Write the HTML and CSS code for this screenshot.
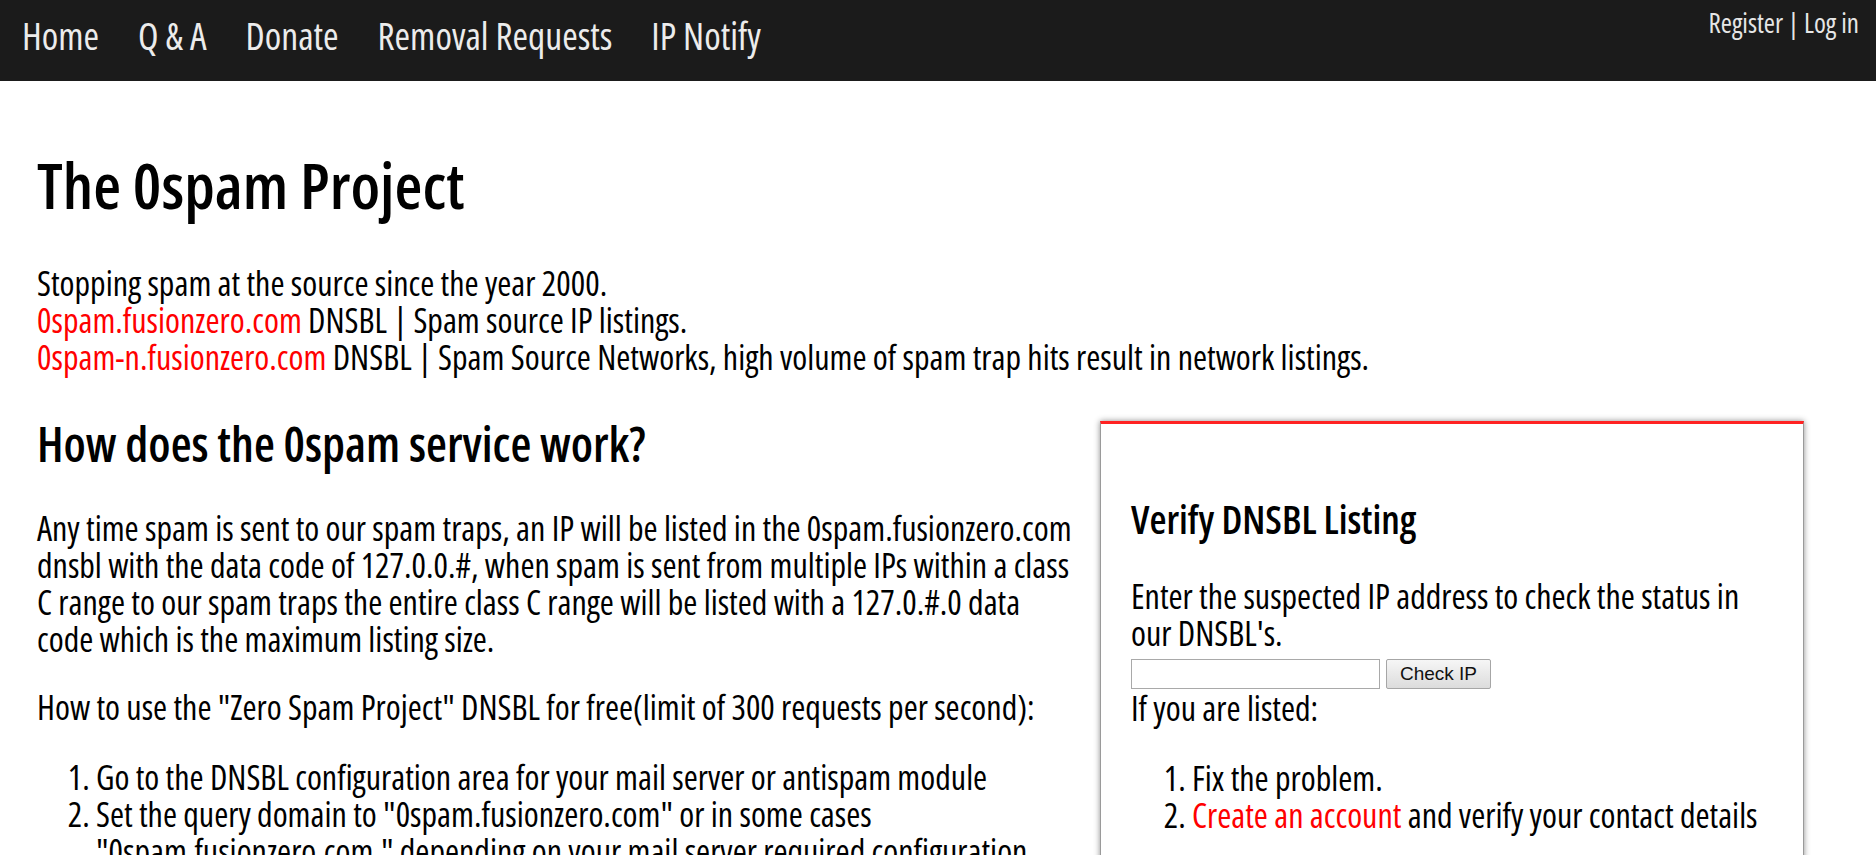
FILE: index.html
```html
<!DOCTYPE html>
<html lang="en">
<head>
<meta charset="utf-8">
<title>The 0spam Project</title>
<link rel="stylesheet" href="styles.css">
</head>
<body>
<header class="topbar">
  <nav class="main-nav">
    <a href="#">Home</a>
    <a href="#">Q &amp; A</a>
    <a href="#">Donate</a>
    <a href="#">Removal Requests</a>
    <a href="#">IP Notify</a>
  </nav>
  <div class="account"><a href="#">Register</a> | <a href="#">Log in</a></div>
</header>
<main class="page">
  <h1 class="title">The 0spam Project</h1>
  <p class="intro">Stopping spam at the source since the year 2000.<br>
  <a class="red" href="#">0spam.fusionzero.com</a> DNSBL | Spam source IP listings.<br>
  <a class="red" href="#">0spam-n.fusionzero.com</a> DNSBL | Spam Source Networks, high volume of spam trap hits result in network listings.</p>
  <div class="columns">
    <section class="about">
      <h2 class="section-title">How does the 0spam service work?</h2>
      <p class="text">Any time spam is sent to our spam traps, an IP will be listed in the 0spam.fusionzero.com dnsbl with the data code of 127.0.0.#, when spam is sent from multiple IPs within a class C range to our spam traps the entire class C range will be listed with a 127.0.#.0 data code which is the maximum listing size.</p>
      <p class="text">How to use the "Zero Spam Project" DNSBL for free(limit of 300 requests per second):</p>
      <ol class="steps">
        <li>Go to the DNSBL configuration area for your mail server or antispam module</li>
        <li>Set the query domain to "0spam.fusionzero.com" or in some cases "0spam.fusionzero.com." depending on your mail server required configuration</li>
      </ol>
    </section>
    <aside class="verify">
      <h3 class="verify-title">Verify DNSBL Listing</h3>
      <p class="text verify-text">Enter the suspected IP address to check the status in our DNSBL's.</p>
      <form class="check-form">
        <input class="ip-input" type="text">
        <button class="check-btn" type="button">Check IP</button>
      </form>
      <p class="text listed">If you are listed:</p>
      <ol class="steps">
        <li>Fix the problem.</li>
        <li><a class="red" href="#">Create an account</a> and verify your contact details</li>
      </ol>
    </aside>
  </div>
</main>
</body>
</html>
```
FILE: styles.css
```css
* { box-sizing: border-box; }
html, body { margin: 0; padding: 0; background: #fff; }
body {
  font-family: "Open Sans", "Roboto", sans-serif;
  font-stretch: 85%;
  color: #000;
  font-size: 34px;
  line-height: 37px;
}
a { text-decoration: none; }

.topbar {
  height: 81px;
  background: #1b1b1b;
  display: flex;
  justify-content: space-between;
  align-items: flex-start;
  padding: 0 17px 0 22px;
}
.main-nav {
  display: flex;
  gap: 39px;
  height: 81px;
  padding-bottom: 10px;
  align-items: center;
}
.main-nav a {
  color: #ececec;
  font-size: 37.5px;
  line-height: 44px;
}
.account {
  color: #e6e6e6;
  font-size: 27px;
  line-height: 32px;
  padding-top: 7px;
}
.account a { color: #e6e6e6; }

.page { padding: 0 72px 0 37px; }

.title {
  margin: 66px 0 0;
  font-size: 64px;
  font-stretch: 75%;
  line-height: 1.2;
  font-weight: 600;
}
.intro { margin: 41px 0 0; }
.red { color: #ff0000; }

.columns {
  display: grid;
  grid-template-columns: 1043px 1fr;
  gap: 20px;
  align-items: start;
  margin-top: 42px;
}
.section-title {
  margin: -3px 0 0;
  font-size: 48px;
  font-stretch: 75%;
  line-height: 1.2;
  font-weight: 600;
}
.text { margin: 0; }
.section-title + .text { margin-top: 38px; }
.about .text + .text { margin-top: 31px; }
.steps {
  margin: 33px 0 0;
  padding-left: 59px;
}

.verify {
  margin-top: 3px;
  border: 1px solid #9a9a9a;
  border-top: 3px solid #ff2222;
  box-shadow: 0 0 6px rgba(0, 0, 0, 0.45);
  padding: 31px 30px 40px 30px;
  min-height: 460px;
}
.verify-title {
  margin: 41px 0 0;
  font-size: 39px;
  font-stretch: 75%;
  line-height: 1.2;
  font-weight: 600;
}
.verify-text { margin-top: 35px; }
.check-form {
  display: flex;
  gap: 6px;
  margin-top: 7px;
  height: 30px;
}
.ip-input {
  width: 249px;
  height: 30px;
  border: 1px solid #a9a9a9;
  padding: 0 4px;
  font-size: 18px;
}
.check-btn {
  height: 30px;
  width: 105px;
  border: 1px solid #a6a6a6;
  border-radius: 2px;
  background: linear-gradient(#f6f6f6, #dcdcdc);
  font-family: "Liberation Sans", Arial, sans-serif;
  font-stretch: normal;
  font-size: 19px;
  color: #111;
  padding: 0;
}
.listed { margin-top: 1px; }
.verify .steps { padding-left: 61px; }
```
